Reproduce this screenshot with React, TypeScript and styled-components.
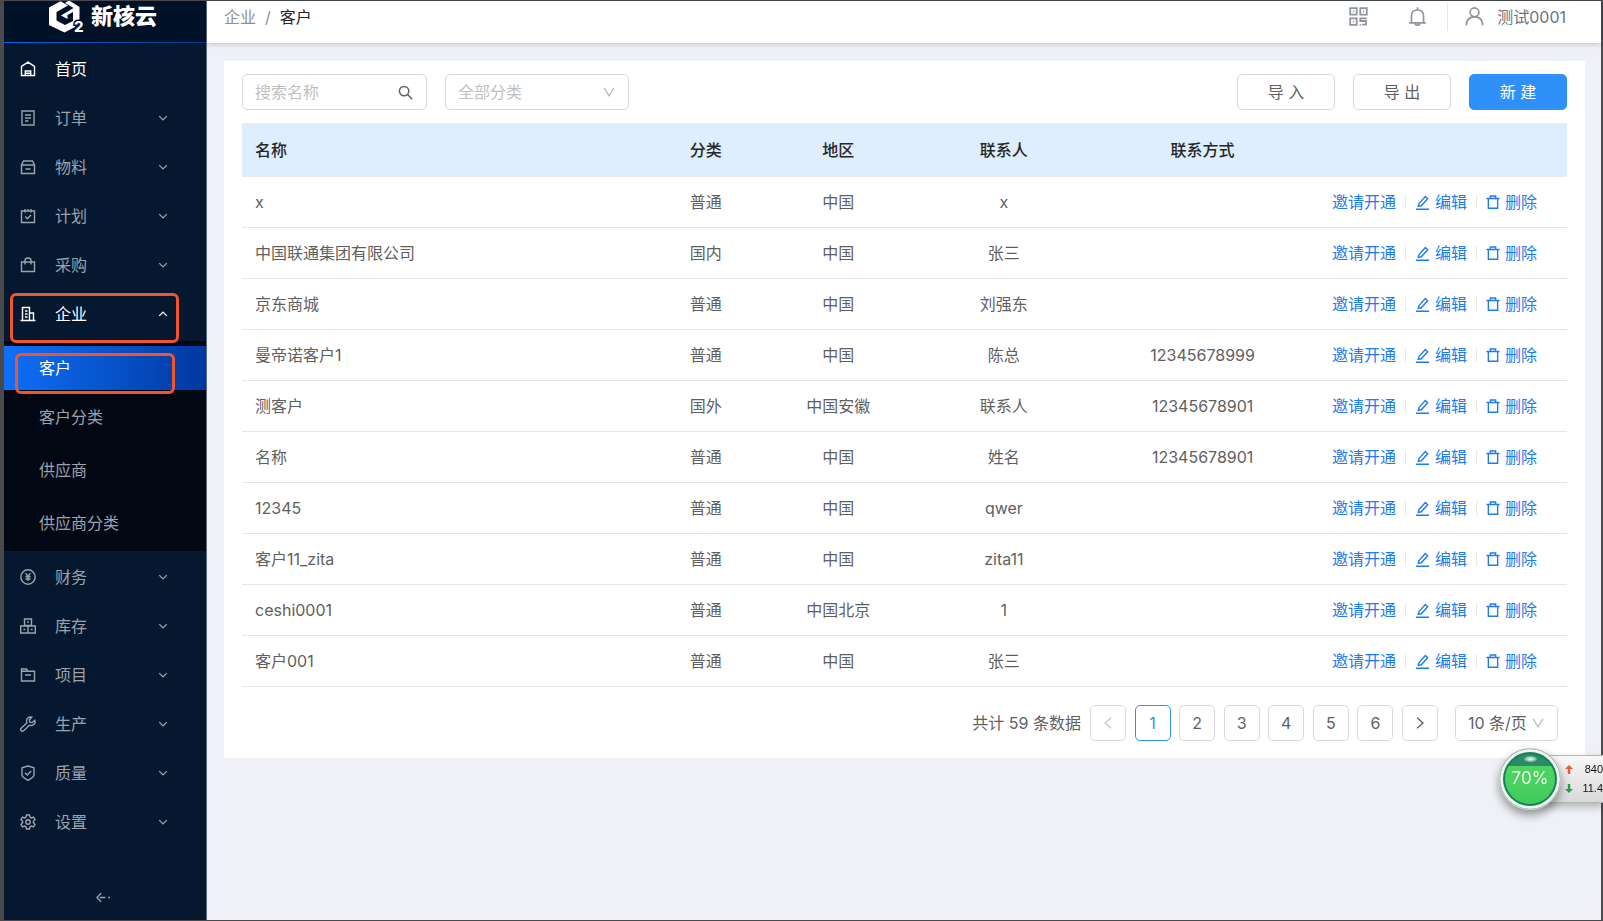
import React from "react";
import styled, { createGlobalStyle, css } from "styled-components";

const GlobalStyle = createGlobalStyle`
  *, *::before, *::after { box-sizing: border-box; }
  body {
    margin: 0;
    background: #4a4a4c;
    color: #5f5f5f;
    font: 16px/24px Inter, "Noto Sans CJK SC", sans-serif;
  }
  button, input, select { font: inherit; color: inherit; margin: 0; }
  a { color: inherit; text-decoration: none; }
  svg { display: block; flex: none; }
`;

/* ---------- icons ---------- */

type IconName =
  | "home" | "order" | "box" | "plan" | "bag" | "building" | "yen" | "stock"
  | "folder" | "wrench" | "shield" | "gear" | "search" | "edit" | "trash"
  | "qr" | "bell" | "user" | "down" | "up" | "wide" | "prev" | "next" | "collapse";

const shapes: Record<IconName, React.ReactNode> = {
  home: <path d="M1.500 14.500V5.500L8 1.200l6.500 4.300v9zM5.300 14.500v-4.500h5.400v4.500M5.300 12.300h5.400" />,
  order: <path d="M2 1h12v14H2zM5 5h6M5 8h6M5 11h3.500" />,
  box: <path d="M1.500 6h13v8.500h-13zM1.500 6l2-4h9l2 4M5.500 10h5" />,
  plan: <path d="M1.500 3h13v11.500h-13zM5 1v3.500M11 1v3.500M8 1v2M5.200 8.500l2.200 2.200 3.600-3.700" />,
  bag: <path d="M1.500 5h13v9.500h-13zM5 7.500V3.500Q5 1 8 1t3 2.500v4" />,
  building: <path d="M0.500 14.500h15M2.500 14.500v-13h7v13M9.500 7h4v7.500M5 5h2.500M5 8h2.500M5 11h2.500" />,
  yen: <><circle cx="8" cy="8" r="7.200" /><path d="M5.500 4.200L8 7.500l2.500-3.300M8 7.500V12M5.500 7.800h5M5.500 10h5" /></>,
  stock: <path d="M4.500 1h7v6.500h-7zM0.700 8h7.300v7H0.700zM8 8h7.300v7H8zM7.200 4h1.800M3.500 11.500h1.800M10.800 11.500h1.800" />,
  folder: <path d="M1.500 14V2h5l1.500 2.300h6.500V14zM1.500 4.300H8M5 8h6" />,
  wrench: <path d="M14.800 4.200l-2.600 2.400-2.300-.5-.5-2.300L11.800 1.200C9 .3 6.300 2.300 6.600 5.400L6.900 6.700 1.200 12.300a1.700 1.700 0 0 0 2.500 2.500L9.400 9.200l1.300.3c3.200.2 5-2.500 4.100-5.300z" />,
  shield: <path d="M8 1l6 1.800v7.400Q14 12 8 15.300 2 12 2 10.200V2.800zM5 7.700l2.300 2.300L11.200 6" />,
  gear: <><circle cx="8" cy="8" r="2.200" /><path d="M6.500 1h3l.5 2.100 1.300.8 2.200-.8L15 5.700l-1.600 1.500v1.600l1.600 1.500-1.500 2.600-2.200-.8-1.300.8-.5 2.100h-3L6 12.900l-1.300-.8-2.200.8L1 10.300l1.600-1.500V7.200L1 5.700l1.500-2.600 2.200.8L6 3.100z" /></>,
  search: <><circle cx="6.500" cy="6.500" r="5" /><path d="M10.200 10.200l5 5" /></>,
  edit: <path d="M1 15.200h14M4.200 9.200L11 1.700l2.500 2.400-6.800 7.400-3.200.7z" />,
  trash: <path d="M0.500 4h15M5 4V1.200h6V4M2.700 4v11.200h10.600V4" />,
  qr: <path d="M1 1h5.500v5.500H1zM9.500 1H15v5.500H9.500zM1 9.500h5.500V15H1zM3.300 3.700h1M11.800 3.700h1M3.300 12.300h1M15 9.500H9.500v2.300h4.800v3H11M9 15h1" />,
  bell: <path d="M1 13.300h14M2.900 13.300V7.500Q3 2.500 8 2.500t5.100 5v5.800M8 .3v2.200M6 13.300q0 2.200 2 2.200t2-2.200" />,
  user: <><circle cx="8" cy="4.500" r="3.700" /><path d="M1 15.500Q1.300 8.300 8 8.300t7 7.200" /></>,
  down: <path d="M2 5l6 6 6-6" />,
  up: <path d="M2 11l6-6 6 6" />,
  wide: <path d="M1.500 2.500L8 13l6.500-10.500" />,
  prev: <path d="M12 1L4 8l8 7" />,
  next: <path d="M4 1l8 7-8 7" />,
  collapse: <path d="M5.500 3.500L1 8l4.500 4.500M4 8h6M13 8h2" />,
};

const Icon = ({ name, size = 15, weight = 1.4 }: { name: IconName; size?: number; weight?: number }) => (
  <svg width={size} height={size} viewBox="0 0 16 16" fill="none" stroke="currentColor" strokeWidth={weight} aria-hidden="true">
    {shapes[name]}
  </svg>
);

/* ---------- frame ---------- */

const Frame = styled.div`
  display: flex;
  min-height: 100vh;
  padding: 1px 2px 1px 4px;
`;

const Sidebar = styled.aside`
  display: flex;
  flex-direction: column;
  flex: none;
  width: 203px;
  background: #06182f;
  border-right: 1px solid #5d6878;
  color: #9ba3ad;
`;

const Brand = styled.div`
  display: flex;
  align-items: flex-start;
  gap: 5px;
  height: 42px;
  padding-left: 44px;
  background: #011128;
  border-bottom: 1px solid;
  border-image: linear-gradient(90deg, #0a66e6, #08397f) 1;
  overflow: hidden;
`;

const BrandName = styled.strong`
  color: #fff;
  font-size: 22px;
  line-height: 30px;
  font-weight: 900;
`;

const Menu = styled.ul`
  list-style: none;
  margin: 0;
  padding: 1px 0 0;
`;

const MenuButton = styled.button<{ $active?: boolean }>`
  position: relative;
  display: flex;
  align-items: center;
  gap: 19px;
  width: 100%;
  height: 49px;
  padding: 0 38px 0 16px;
  border: 0;
  background: none;
  color: ${(p) => (p.$active ? "#fff" : "inherit")};
  text-align: left;
`;

const MenuLabel = styled.span`
  flex: 1;
`;

const SubMenu = styled.ul`
  list-style: none;
  margin: 3px 0 1px;
  padding: 5px 0 2px;
  background: #010814;
`;

const SubLink = styled.a<{ $active?: boolean }>`
  position: relative;
  display: flex;
  align-items: center;
  height: 53px;
  padding-left: 35px;
  ${(p) =>
    p.$active &&
    css`
      height: 44px;
      color: #fff;
      background: linear-gradient(90deg, #0f70f8, #00389f);
    `}
`;

const Mark = styled.span<{ $sub?: boolean }>`
  position: absolute;
  left: ${(p) => (p.$sub ? 11 : 6)}px;
  right: ${(p) => (p.$sub ? 31 : 27)}px;
  top: ${(p) => (p.$sub ? 7 : 4)}px;
  height: ${(p) => (p.$sub ? 41 : 50)}px;
  border: 3px solid #f1552b;
  border-radius: 6px;
  z-index: 1;
  pointer-events: none;
`;

const Collapse = styled.button`
  display: flex;
  align-items: center;
  justify-content: center;
  height: 46px;
  margin-top: auto;
  padding: 0 4px 0 0;
  border: 0;
  background: none;
  color: inherit;
`;

const Main = styled.div`
  flex: 1;
  min-width: 0;
  background: #eff1f6;
`;

const TopBar = styled.header`
  display: flex;
  justify-content: space-between;
  height: 42px;
  padding: 0 35px 11px 17px;
  background: #fff;
  box-shadow: 0 1px 5px rgba(0, 21, 41, 0.22);
`;

const Crumbs = styled.nav`
  display: flex;
  align-items: center;
  gap: 9px;
  color: #8f8f8f;

  b { font-weight: 400; color: #262626; }
`;

const Tools = styled.div`
  display: flex;
  align-items: center;
  color: #8f959e;
`;

const ToolButton = styled.button`
  display: flex;
  align-items: center;
  gap: 13px;
  height: 28px;
  padding: 0 20px;
  border: 0;
  background: none;
  color: inherit;

  &:last-child {
    padding: 0 0 0 17px;
    border-left: 1px solid #e4e6e9;
  }
`;

const UserName = styled.span`
  color: #6b7480;
`;

const Card = styled.main`
  margin: 18px 16px 0 17px;
  padding: 13px 18px 17px;
  background: #fff;
`;

const Toolbar = styled.div`
  display: flex;
  gap: 18px;
  margin-bottom: 13px;
`;

const Spacer = styled.div`
  flex: 1;
`;

const field = css`
  border: 1px solid #d9d9d9;
  border-radius: 5px;
  background: #fff;
`;

const Field = styled.label<{ $width: number; $faint?: boolean }>`
  ${field}
  position: relative;
  display: flex;
  align-items: center;
  width: ${(p) => p.$width}px;
  height: 36px;
  padding-right: 13px;
  color: ${(p) => (p.$faint ? "#bfbfbf" : "#5f5f5f")};

  input, select {
    flex: 1;
    min-width: 0;
    height: 34px;
    padding: 0 0 0 12px;
    border: 0;
    outline: 0;
    background: none;
    appearance: none;
  }
  input::placeholder { color: #bfbfbf; opacity: 1; }
  svg { pointer-events: none; }
  select + svg { color: #b8b8b8; }
`;

const Button = styled.button<{ $primary?: boolean }>`
  ${field}
  width: 98px;
  height: 36px;
  padding: 0;
  ${(p) =>
    p.$primary &&
    css`
      border-color: #2f90fa;
      background: #2f90fa;
      color: #fff;
    `}
`;

const Table = styled.table`
  width: 100%;
  table-layout: fixed;
  border-collapse: separate;
  border-spacing: 0;
`;

const Th = styled.th<{ $width: number; $left?: boolean }>`
  width: ${(p) => p.$width}%;
  height: 54px;
  padding: 0 13px;
  background: #deeefc;
  border-bottom: 1px solid #e6e9ec;
  color: #262626;
  font-weight: 500;
  text-align: ${(p) => (p.$left ? "left" : "center")};
`;

const Td = styled.td<{ $left?: boolean }>`
  height: 51px;
  padding: 0 13px;
  border-bottom: 1px solid #e6e6e6;
  text-align: ${(p) => (p.$left ? "left" : "center")};
`;

const Actions = styled.div`
  display: flex;
  align-items: center;
  justify-content: center;
  color: #1f7bf0;
`;

const Action = styled.a`
  display: flex;
  align-items: center;
  gap: 5px;
  white-space: nowrap;

  & + & {
    position: relative;
    margin-left: 9px;
    padding-left: 10px;
  }
  & + &::before {
    content: "";
    position: absolute;
    left: 0;
    height: 14px;
    border-left: 1px solid #e8e8e8;
  }
`;

const Pagination = styled.nav`
  display: flex;
  align-items: center;
  justify-content: flex-end;
  margin: 18px 9px 0 0;
`;

const Total = styled.span`
  margin-right: 9px;
`;

const Pages = styled.div`
  display: flex;
  justify-content: space-between;
  width: 348px;
  margin-right: 17px;
`;

const Page = styled.button<{ $current?: boolean }>`
  ${field}
  display: flex;
  align-items: center;
  justify-content: center;
  width: 36px;
  height: 36px;
  padding: 0;
  ${(p) => p.$current && css`border-color: #2f90fa; color: #2f90fa;`}

  &:disabled { color: #c4c4c4; }
`;

/* ---------- floating speed monitor ---------- */

const Monitor = styled.div`
  position: fixed;
  right: 0;
  top: 748px;
  display: flex;
  align-items: center;
  width: 104px;
  height: 62px;
`;

const Ball = styled.div`
  position: relative;
  flex: none;
  width: 62px;
  height: 62px;
  border: 1px solid #bfc2c2;
  border-radius: 50%;
  background: linear-gradient(#2b8b66 0 17px, #4fd463 17px, #3fca5b);
  box-shadow: inset 0 0 0 3px #f0f2f1, inset 0 0 0 5px #128354, 0 5px 10px rgba(0, 0, 0, 0.4);
  color: #e9fbe9;
  font-size: 17px;
  line-height: 58px;
  text-align: center;
  z-index: 1;

  &::before {
    content: "";
    position: absolute;
    top: 7px;
    left: 24px;
    width: 13px;
    height: 6px;
    border-radius: 50%;
    background: radial-gradient(#fff, rgba(255, 255, 255, 0));
  }
`;

const Speeds = styled.div`
  flex: 1;
  height: 48px;
  margin-left: -20px;
  padding: 4px 0 0 23px;
  border: 1px solid #b5b6b8;
  border-right: 0;
  background: linear-gradient(#f8f8f8, #d9d9d9);
  box-shadow: 0 4px 8px rgba(0, 0, 0, 0.25);
  color: #111;
  font: 11px/19px "Liberation Sans", sans-serif;
`;

const Speed = styled.div<{ $color: string }>`
  display: flex;
  align-items: center;
  justify-content: space-between;

  svg { color: ${(p) => p.$color}; }
`;

const Arrow = ({ d }: { d: string }) => (
  <svg width="8" height="9" viewBox="0 0 8 9" aria-hidden="true">
    <path d={d} fill="currentColor" />
  </svg>
);

/* ---------- data ---------- */

const menuTop: [IconName, string][] = [
  ["home", "首页"], ["order", "订单"], ["box", "物料"], ["plan", "计划"], ["bag", "采购"], ["building", "企业"],
];
const menuBottom: [IconName, string][] = [
  ["yen", "财务"], ["stock", "库存"], ["folder", "项目"], ["wrench", "生产"], ["shield", "质量"], ["gear", "设置"],
];
const subItems = ["客户", "客户分类", "供应商", "供应商分类"];
const columns: [string, number][] = [
  ["名称", 30], ["分类", 10], ["地区", 10], ["联系人", 15], ["联系方式", 15], ["", 20],
];
const rows = [
  ["x", "普通", "中国", "x", ""],
  ["中国联通集团有限公司", "国内", "中国", "张三", ""],
  ["京东商城", "普通", "中国", "刘强东", ""],
  ["曼帝诺客户1", "普通", "中国", "陈总", "12345678999"],
  ["测客户", "国外", "中国安徽", "联系人", "12345678901"],
  ["名称", "普通", "中国", "姓名", "12345678901"],
  ["12345", "普通", "中国", "qwer", ""],
  ["客户11_zita", "普通", "中国", "zita11", ""],
  ["ceshi0001", "普通", "中国北京", "1", ""],
  ["客户001", "普通", "中国", "张三", ""],
];

const MenuItem = ({ icon, label }: { icon: IconName; label: string }) => {
  const open = label === "企业";
  return (
    <MenuButton $active={open || label === "首页"} aria-expanded={open}>
      <Icon name={icon} size={16} />
      <MenuLabel>{label}</MenuLabel>
      {label !== "首页" && <Icon name={open ? "up" : "down"} size={10} weight={2.2} />}
      {open && <Mark />}
    </MenuButton>
  );
};

const Logo = () => (
  <svg width="38" height="34" viewBox="0 0 38 34" aria-hidden="true">
    <path d="M12 0.500L1 6.500V24l15.500 7.500L27 26v-7l-10 5-8.500-4.500V11L20 4.500 13 .5z" fill="#fff" />
    <path d="M20 0h2l9.500 6v12.500L25 22V11l-5.500 3v4L13 14.500 25.500 7 17 2z" fill="#fff" />
    <text x="26" y="31" fill="#fff" stroke="#011128" strokeWidth="3" paintOrder="stroke" fontSize="15" fontWeight="800">2</text>
  </svg>
);

export default function App() {
  return (
    <>
      <GlobalStyle />
      <Frame>
        <Sidebar>
          <Brand>
            <Logo />
            <BrandName>新核云</BrandName>
          </Brand>
          <Menu>
            {menuTop.map(([icon, label]) => (
              <li key={label}><MenuItem icon={icon} label={label} /></li>
            ))}
            <li>
              <SubMenu>
                {subItems.map((label, i) => (
                  <li key={label}>
                    <SubLink href="#" $active={i === 0}>
                      {label}
                      {i === 0 && <Mark $sub />}
                    </SubLink>
                  </li>
                ))}
              </SubMenu>
            </li>
            {menuBottom.map(([icon, label]) => (
              <li key={label}><MenuItem icon={icon} label={label} /></li>
            ))}
          </Menu>
          <Collapse aria-label="收起菜单"><Icon name="collapse" size={15} /></Collapse>
        </Sidebar>

        <Main>
          <TopBar>
            <Crumbs>
              <a href="#">企业</a>
              <span>/</span>
              <b>客户</b>
            </Crumbs>
            <Tools>
              <ToolButton aria-label="二维码"><Icon name="qr" size={19} weight={1.5} /></ToolButton>
              <ToolButton aria-label="通知"><Icon name="bell" size={19} weight={1.4} /></ToolButton>
              <ToolButton>
                <Icon name="user" size={19} weight={1.4} />
                <UserName>测试0001</UserName>
              </ToolButton>
            </Tools>
          </TopBar>

          <Card>
            <Toolbar>
              <Field $width={185}>
                <input type="text" placeholder="搜索名称" aria-label="搜索名称" />
                <Icon name="search" size={15} weight={1.6} />
              </Field>
              <Field $width={184} $faint>
                <select aria-label="分类"><option>全部分类</option></select>
                <Icon name="wide" size={12} weight={1.6} />
              </Field>
              <Spacer />
              <Button>导 入</Button>
              <Button>导 出</Button>
              <Button $primary>新 建</Button>
            </Toolbar>

            <Table>
              <thead>
                <tr>
                  {columns.map(([label, width], i) => (
                    <Th key={i} $width={width} $left={i === 0}>{label}</Th>
                  ))}
                </tr>
              </thead>
              <tbody>
                {rows.map((row) => (
                  <tr key={row[0]}>
                    {row.map((cell, i) => (
                      <Td key={i} $left={i === 0}>{cell}</Td>
                    ))}
                    <Td>
                      <Actions>
                        <Action href="#"><span>邀请开通</span></Action>
                        <Action href="#"><Icon name="edit" size={15} weight={1.5} />编辑</Action>
                        <Action href="#"><Icon name="trash" size={14} weight={1.6} />删除</Action>
                      </Actions>
                    </Td>
                  </tr>
                ))}
              </tbody>
            </Table>

            <Pagination aria-label="分页">
              <Total>共计 59 条数据</Total>
              <Pages>
                <Page disabled aria-label="上一页"><Icon name="prev" size={12} weight={1.6} /></Page>
                {[1, 2, 3, 4, 5, 6].map((n) => (
                  <Page key={n} $current={n === 1}>{n}</Page>
                ))}
                <Page aria-label="下一页"><Icon name="next" size={12} weight={1.8} /></Page>
              </Pages>
              <Field $width={103}>
                <select aria-label="每页条数"><option>10 条/页</option></select>
                <Icon name="wide" size={12} weight={1.6} />
              </Field>
            </Pagination>
          </Card>
        </Main>
      </Frame>

      <Monitor>
        <Ball>70%</Ball>
        <Speeds>
          <Speed $color="#f0553a"><Arrow d="M4 0l4 4H5.200v5H2.800V4H0z" />840</Speed>
          <Speed $color="#1fa050"><Arrow d="M4 9L0 5h2.800V0h2.400v5H8z" />11.4</Speed>
        </Speeds>
      </Monitor>
    </>
  );
}
